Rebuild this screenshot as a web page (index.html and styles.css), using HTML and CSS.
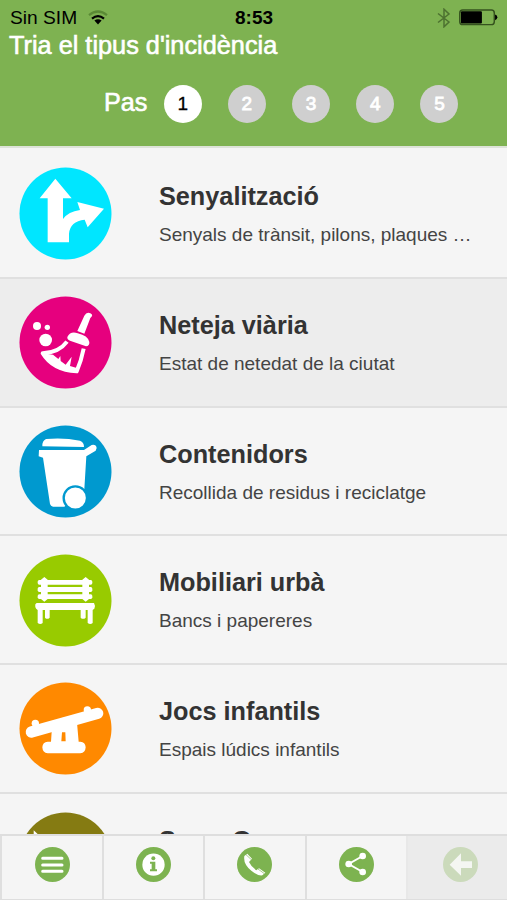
FILE: index.html
```html
<!DOCTYPE html>
<html lang="ca">
<head>
<meta charset="utf-8">
<title>Tria el tipus d'incidència</title>
<link rel="stylesheet" href="styles.css">
</head>
<body>
<div class="app">
  <header class="header">
    <div class="status">
      <div class="carrier"><span>Sin SIM</span>
        <svg class="wifi" viewBox="0 0 20 15"><g fill="none" stroke-width="2.2"><path d="M1 5.2Q10-2.2 19 5.2" stroke="#5a8a35"/><path d="M4 8.6Q10 3.6 16 8.6" stroke="#000"/></g><path d="M6.4 10.6Q10 7.8 13.6 10.6L10 14.4Z"/></svg>
      </div>
      <span class="clock">8:53</span>
      <div class="indicators">
        <svg class="bluetooth" viewBox="0 0 14 20"><path d="M1 5.500 12 14 7 18.800V1.200L12 6 1 14.500" fill="none" stroke="#4d7130" stroke-width="1.5"/></svg>
        <svg class="battery" viewBox="0 0 40 17"><rect x=".8" y=".8" width="35.4" height="15" rx="3" fill="none" stroke="#35521e" stroke-width="1.5"/><rect x="2" y="2" width="21.5" height="12.6" rx="1"/><path d="M37 5.500Q39.300 6 39.300 8.300T37 11.200Z"/></svg>
      </div>
    </div>
    <h1 class="title">Tria el tipus d'incidència</h1>
    <div class="steps">
      <span class="steps-label">Pas</span>
      <span class="step current">1</span><span class="step">2</span><span class="step">3</span><span class="step">4</span><span class="step">5</span>
    </div>
  </header>

  <main class="list">
    <article class="row">
      <svg class="icon" viewBox="26 22 279 279"><circle cx="165.500" cy="161.500" r="138" fill="#00e6ff"/><path fill="#fff" d="M135 57 184 116H158V178Q174 156 209 151L201 127 281 147 232 203 223 180Q179 185 176 222V248H112V116H88Z"/></svg>
      <div class="text"><h2>Senyalització</h2><p>Senyals de trànsit, pilons, plaques …</p></div>
    </article>
    <article class="row selected">
      <svg class="icon" viewBox="26 24 279 279"><circle cx="165.500" cy="163.500" r="138" fill="#e6007e"/><g fill="#fff"><circle cx="80" cy="114" r="12"/><circle cx="111" cy="118" r="8"/><circle cx="106" cy="156" r="19"/><path d="M222 83Q229 71 240 76T240 90L222 137 201 129Z"/><path d="M171 147Q181 128 202 136 233 143 237 162 238 174 227 175L179 158Q170 155 171 147Z"/></g><path d="M170 161Q146 194 97 196 128 247 199 250 213 218 220 182" fill="none" stroke="#fff" stroke-width="12" stroke-linejoin="round"/><path fill="#fff" d="M97 196 128 200 144 213 150 204 151 219 166 230 184 206 179 234 202 241 199 252 140 240Z"/></svg>
      <div class="text"><h2>Neteja viària</h2><p>Estat de netedat de la ciutat</p></div>
    </article>
    <article class="row">
      <svg class="icon" viewBox="26 25 279 279"><circle cx="165.500" cy="164.500" r="138" fill="#0099cf"/><path fill="#fff" d="M96 89Q95 73 107 67 160 62 209 72 221 76 221 91ZM86 100H221L244 85Q257 82 259 94L256 102 228 119 222 217 162 270H128Q121 269 119 262L98 123 85 119Z"/><circle cx="195" cy="244" r="35" fill="#fff" stroke="#0099cf" stroke-width="7"/></svg>
      <div class="text"><h2>Contenidors</h2><p>Recollida de residus i reciclatge</p></div>
    </article>
    <article class="row">
      <svg class="icon" viewBox="26 23 279 279"><circle cx="165.500" cy="162.500" r="138" fill="#98cb00"/><g fill="#fff"><rect x="82" y="101" width="164" height="14" rx="5"/><rect x="82" y="122" width="164" height="15" rx="5"/><rect x="82" y="144" width="164" height="14" rx="5"/><path d="M92 100 102 92 112 100V158L102 166 92 158ZM216 100 226 92 236 100V158L226 166 216 158Z"/><path d="M79 170H251Q256 178 252 187L247 191V230Q240 236 232 230V191H226V214Q218 221 211 214V191H118V214Q110 221 104 214V191H97V230Q90 236 82 230V191Q73 187 75 174Z"/></g></svg>
      <div class="text"><h2>Mobiliari urbà</h2><p>Bancs i papereres</p></div>
    </article>
    <article class="row">
      <svg class="icon" viewBox="26 23 279 279"><circle cx="165.500" cy="162.500" r="138" fill="#ff8900"/><path d="M63 173 262 117" stroke="#fff" stroke-width="34" stroke-linecap="round"/><g fill="#fff"><circle cx="75" cy="147" r="11"/><circle cx="231" cy="107" r="11"/><path fill-rule="evenodd" d="M125 158 200 145 205 202H210Q225 203 226 219 225 236 210 237H112Q97 236 96 219 97 203 112 202H122ZM155 174 153 201H166L165 174Z"/></g></svg>
      <div class="text"><h2>Jocs infantils</h2><p>Espais lúdics infantils</p></div>
    </article>
    <article class="row last">
      <svg class="icon" viewBox="26 23 279 279"><circle cx="165.500" cy="162.500" r="138" fill="#857b12"/><path fill="#fff" d="M70 78 84 91H70Z"/></svg>
      <div class="text"><h2>Sorra Gossos</h2></div>
    </article>
  </main>

  <nav class="toolbar">
    <a class="tool"><svg viewBox="0 0 105 105"><circle cx="52.500" cy="52.500" r="52.500" fill="#7db350"/><path d="M23 34H81M23 54H81M23 73H81" stroke="#fff" stroke-width="9" stroke-linecap="round"/></svg></a>
    <a class="tool"><svg viewBox="0 0 105 105"><circle cx="52.500" cy="52.500" r="52.500" fill="#7db350"/><circle cx="52.500" cy="53" r="33.500" fill="#fff"/><g fill="#7db350"><circle cx="52" cy="34" r="6"/><path d="M42 44H58V67H63V73H42V67H47V50H42Z"/></g></svg></a>
    <a class="tool"><svg viewBox="0 0 105 105"><circle cx="52.500" cy="52.500" r="52.500" fill="#7db350"/><path fill="#fff" d="M22 27 31 20 45 35 36 45Q43 60 58 70L66 64 85 77 76 85Q62 87 43 71 18 51 22 27Z"/><path d="M27 23 43 38M63 66 82 80" stroke="#7db350" stroke-width="2"/></svg></a>
    <a class="tool"><svg viewBox="0 0 105 105"><circle cx="52.500" cy="52.500" r="52.500" fill="#7db350"/><path d="M71 27 29 51 71 75" fill="none" stroke="#fff" stroke-width="6"/><g fill="#fff"><circle cx="71" cy="27" r="10"/><circle cx="29" cy="51" r="10"/><circle cx="71" cy="75" r="10"/></g></svg></a>
    <a class="tool disabled"><svg viewBox="0 0 105 105"><circle cx="52.500" cy="52.500" r="52.500" fill="#cbdabb"/><path fill="#f4f6f2" d="M20 53 54 19V43H87V63H54V86Z"/></svg></a>
  </nav>
</div>
</body>
</html>
```

FILE: styles.css
```css
* { box-sizing: border-box; }

body {
  margin: 0;
  font-family: "Liberation Sans", Arial, sans-serif;
  color: #333;
  background: #f5f5f5;
}

h1, h2, p { margin: 0; }

.app {
  display: flex;
  flex-direction: column;
  height: 900px;
  overflow: hidden;
}

.header {
  flex: none;
  height: 148px;
  background: #7eb251;
  border-bottom: 2px solid #dde3d8;
  color: #fff;
}

.status {
  display: grid;
  grid-template-columns: 1fr auto 1fr;
  height: 33px;
  padding: 1px 9px 0 10px;
  line-height: 33px;
  font-size: 19.2px;
  color: #000;
}

.carrier, .indicators {
  display: flex;
  align-items: center;
}

.carrier { gap: 11px; }
.indicators { justify-content: flex-end; gap: 8px; }
.clock { font-weight: bold; font-size: 19px; }
.wifi { width: 20px; height: 15px; }
.bluetooth { width: 14px; height: 20px; }
.battery { width: 39px; height: 17px; }

.title {
  padding-left: 9px;
  font-size: 25.3px;
  font-weight: normal;
  line-height: 24px;
  -webkit-text-stroke: 0.6px #fff;
}

.steps {
  display: flex;
  align-items: center;
  height: 38px;
  margin-top: 28px;
  padding-left: 104px;
  gap: 26.2px;
}

.steps-label {
  width: 44px;
  margin-right: -10.5px;
  padding-bottom: 3px;
  font-size: 25.2px;
  -webkit-text-stroke: 0.6px #fff;
}

.step {
  width: 38px;
  height: 38px;
  border-radius: 50%;
  background: #cfcfcf;
  text-align: center;
  font-size: 19px;
  line-height: 38px;
  -webkit-text-stroke: 0.8px #fff;
}

.step.current {
  background: #fff;
  color: #000;
  -webkit-text-stroke: 0.3px #000;
}

.list {
  flex: 1;
  min-height: 0;
  padding-top: 2px;
  overflow: hidden;
}

.row {
  display: flex;
  height: 128.8px;
  padding: 0 30px 0 18.6px;
  border-bottom: 2px solid #e0e0e0;
}

.row.selected { background: #ededed; }

.icon {
  flex: none;
  width: 93px;
  height: 93px;
  margin: 17.3px 47.4px 0 0;
}

.text {
  min-width: 0;
  padding-top: 27px;
  line-height: 38px;
}

.row.last .icon { margin-top: 18px; }

.text h2 { font-size: 25.25px; }

.text p {
  margin-top: 1px;
  font-size: 19px;
  color: #444;
  white-space: nowrap;
  overflow: hidden;
  text-overflow: ellipsis;
}

.toolbar {
  flex: none;
  display: grid;
  grid-template-columns: 102px 101px 101.5px 101.5px 1fr;
  height: 66px;
  border-top: 2px solid #dedede;
  border-bottom: 1px solid #dedede;
}

.tool {
  display: flex;
  justify-content: center;
  padding: 10.5px 0 0 0;
  border-left: 2px solid #dfdfdf;
}

.tool svg {
  width: 35px;
  height: 35px;
}

.tool.disabled {
  padding-left: 6px;
  background: #ebebeb;
  border-left-color: #e8e8e8;
}
```
